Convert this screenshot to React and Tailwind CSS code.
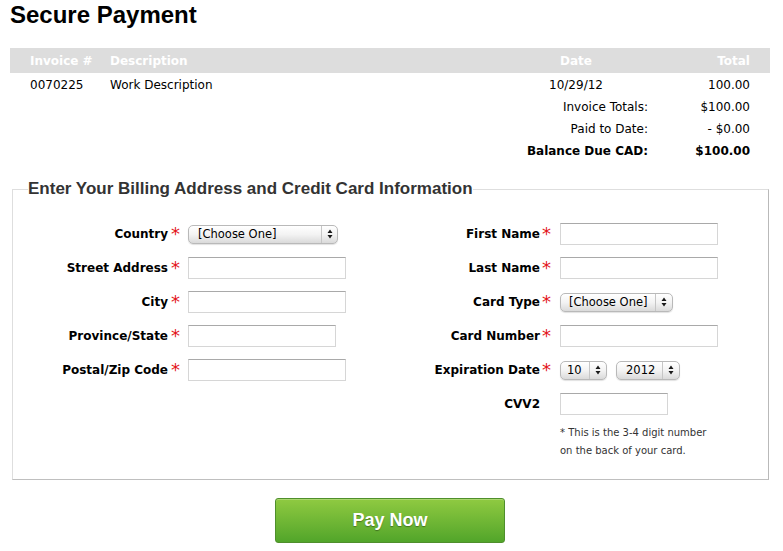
import React from "react";

function Arrows() {
  return (
    <svg width="6" height="10" viewBox="0 0 6 10">
      <path d="M3 0.5 L5.5 4 H0.5 Z M0.5 6 H5.5 L3 9.5 Z" fill="#1a1a1a" />
    </svg>
  );
}

function Select({ className, textClass, children }) {
  return (
    <div
      className={`flex h-[19px] items-stretch overflow-hidden rounded-[5px] border border-[#b9b9b9] bg-gradient-to-b from-white via-[#f3f3f3] to-[#dadada] text-[11.5px] text-black shadow-[0_1px_1px_rgba(0,0,0,0.12)] ${className}`}
    >
      <div className={`flex items-center whitespace-nowrap pt-[1px] ${textClass}`}>{children}</div>
      <div className="flex flex-1 items-center justify-center border-l border-[#c6c6c6]">
        <Arrows />
      </div>
    </div>
  );
}

function Input({ className }) {
  return (
    <input
      type="text"
      className={`h-[22px] border border-[#d6d6d6] border-t-[#a9a9a9] bg-white outline-none ${className}`}
    />
  );
}

function Row({ labelClass, starClass, label, req = true, children }) {
  return (
    <div className="flex h-[22px] items-center">
      <div className={`text-right font-bold text-black ${labelClass}`}>{label}</div>
      <div className={`flex w-[20px] items-center ${starClass}`}>
        {req && <span className="text-[18px] leading-none text-[#e3141b]">*</span>}
      </div>
      {children}
    </div>
  );
}

export default function App() {
  const L = { labelClass: "w-[155px]", starClass: "pl-[3px]" };
  const R = { labelClass: "w-[140px]", starClass: "pl-[2px]" };
  return (
    <div className="min-h-[551px] w-[783px] bg-white font-['DejaVu_Sans',Verdana,sans-serif] text-[12px] text-black">
      <h1 className="h-[48px] px-[10px] pt-[1px] font-['Liberation_Sans',Arial,sans-serif] text-[24px] font-bold leading-[28px] text-black">
        Secure Payment
      </h1>

      <div className="mx-[10px] w-[760px]">
        <div className="grid h-[25px] grid-cols-[80px_396px_140px_104px] items-center bg-[#dddddd] px-[20px] font-bold text-white">
          <div>Invoice #</div>
          <div>Description</div>
          <div className="text-center">Date</div>
          <div className="text-right">Total</div>
        </div>
        <div className="pt-[1px]">
          <div className="grid h-[22px] grid-cols-[80px_396px_140px_104px] items-center px-[20px]">
            <div>0070225</div>
            <div>Work Description</div>
            <div className="text-center">10/29/12</div>
            <div className="text-right">100.00</div>
          </div>
          <div className="grid h-[22px] grid-cols-[618px_102px] items-center px-[20px]">
            <div className="text-right">Invoice Totals:</div>
            <div className="text-right">$100.00</div>
          </div>
          <div className="grid h-[22px] grid-cols-[618px_102px] items-center px-[20px]">
            <div className="text-right">Paid to Date:</div>
            <div className="text-right">- $0.00</div>
          </div>
          <div className="grid h-[22px] grid-cols-[618px_102px] items-center px-[20px] font-bold">
            <div className="text-right">Balance Due CAD:</div>
            <div className="text-right">$100.00</div>
          </div>
        </div>
      </div>

      <fieldset className="mx-[12px] mt-[17px] w-[757px] border border-[#dedede] border-r-[#b9b9b9] border-b-[#bfbfbf] pb-[19px]">
        <legend className="ml-[15px] font-['Liberation_Sans',Arial,sans-serif] text-[17px] font-bold leading-[20px] text-[#333333]">
          Enter Your Billing Address and Credit Card Information
        </legend>
        <div className="grid grid-cols-[387px_1fr] pt-[24px]">
          <div className="flex flex-col gap-[12px]">
            <Row {...L} label="Country">
              <Select className="w-[150px]" textClass="w-[132px] pl-[9px]">[Choose One]</Select>
            </Row>
            <Row {...L} label="Street Address">
              <Input className="w-[158px]" />
            </Row>
            <Row {...L} label="City">
              <Input className="w-[158px]" />
            </Row>
            <Row {...L} label="Province/State">
              <Input className="w-[148px]" />
            </Row>
            <Row {...L} label="Postal/Zip Code">
              <Input className="w-[158px]" />
            </Row>
          </div>
          <div className="flex flex-col">
            <div className="flex flex-col gap-[12px]">
              <Row {...R} label="First Name">
                <Input className="w-[158px]" />
              </Row>
              <Row {...R} label="Last Name">
                <Input className="w-[158px]" />
              </Row>
              <Row {...R} label="Card Type">
                <Select className="w-[113px]" textClass="w-[94px] pl-[8px]">[Choose One]</Select>
              </Row>
              <Row {...R} label="Card Number">
                <Input className="w-[158px]" />
              </Row>
              <Row {...R} label="Expiration Date">
                <div className="flex gap-[9px]">
                  <Select className="w-[47px]" textClass="w-[28px] pl-[6px]">10</Select>
                  <Select className="w-[64px]" textClass="w-[45px] pl-[9px]">2012</Select>
                </div>
              </Row>
              <Row {...R} label="CVV2" req={false}>
                <Input className="w-[108px]" />
              </Row>
            </div>
            <div className="mt-[9px] pl-[160px] text-[10px] leading-[18px] text-[#333333]">
              <div>* This is the 3-4 digit number</div>
              <div>on the back of your card.</div>
            </div>
          </div>
        </div>
      </fieldset>

      <div className="mx-[10px] mt-[18px] flex w-[760px] justify-center">
        <button
          type="button"
          className="h-[45px] w-[230px] rounded-[3px] border border-[#4f8f2c] bg-gradient-to-b from-[#8fca41] to-[#51a52a] font-['Liberation_Sans',Arial,sans-serif] text-[18px] font-bold text-white shadow-[inset_0_1px_0_rgba(255,255,255,0.25)] [text-shadow:0_1px_1px_rgba(0,0,0,0.35)]"
        >
          Pay Now
        </button>
      </div>
    </div>
  );
}
